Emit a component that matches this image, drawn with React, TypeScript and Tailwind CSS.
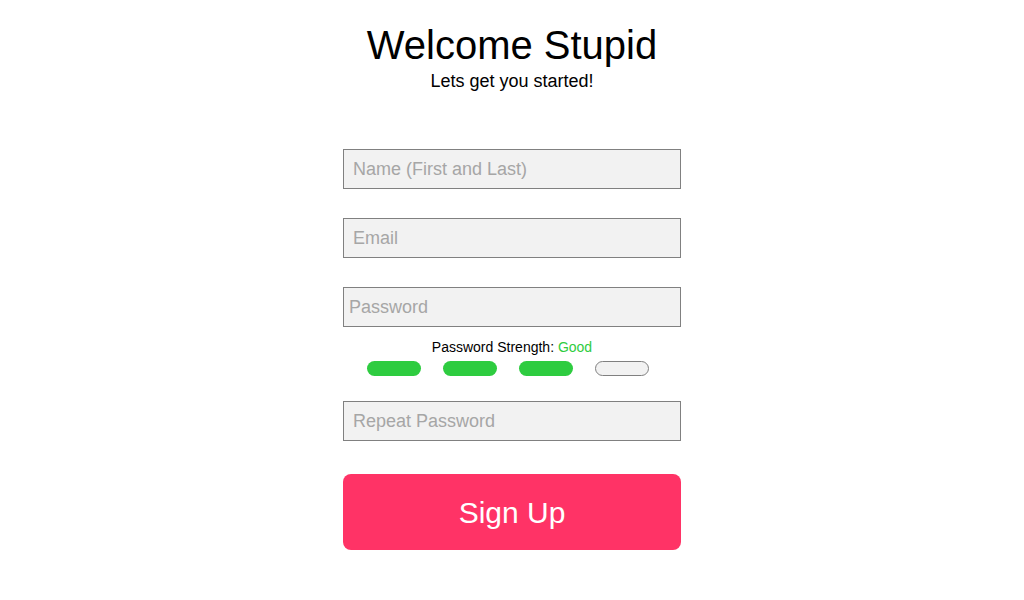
export default function App() {
  const bars = [true, true, true, false];
  const inputCls =
    "h-10 w-[338px] border border-[#808080] bg-[#f2f2f2] px-[9px] text-[18px] text-black outline-none placeholder:text-[#a6a6a6]";

  return (
    <div className="flex h-[600px] w-[1024px] flex-col items-center bg-white font-['Liberation_Sans',Arial,sans-serif]">
      <h1 className="mt-[22px] text-[40px] leading-[46px] text-black">Welcome Stupid</h1>
      <p className="mt-[2px] text-[18px] leading-[22px] text-black">Lets get you started!</p>

      <div className="mt-[57px] flex flex-col items-center">
        <input className={inputCls} placeholder="Name (First and Last)" />
        <input className={`${inputCls} mt-[29px]`} placeholder="Email" />
        <input className={`${inputCls} mt-[29px] !px-[5px]`} placeholder="Password" type="password" />

        <p className="mt-[12px] text-[14px] leading-[16px] text-black">
          Password Strength: <span className="text-[#2ecc40]">Good</span>
        </p>
        <div className="mt-[6px] mr-[9px] flex gap-[22px]">
          {bars.map((on, i) => (
            <div
              key={i}
              className={
                on
                  ? "h-[15px] w-[54px] rounded-full bg-[#2ecc40]"
                  : "h-[15px] w-[54px] rounded-full border border-[#808080] bg-[#f2f2f2]"
              }
            />
          ))}
        </div>

        <input className={`${inputCls} mt-[25px]`} placeholder="Repeat Password" type="password" />

        <button className="mt-[33px] h-[76px] w-[338px] rounded-[8px] bg-[#ff3366] text-[30px] text-white">
          Sign Up
        </button>
      </div>
    </div>
  );
}
